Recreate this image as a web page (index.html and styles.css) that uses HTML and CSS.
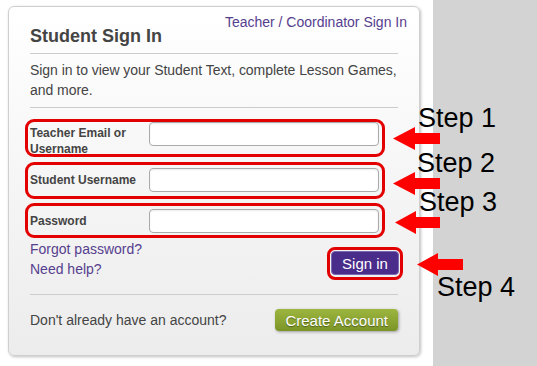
FILE: index.html
```html
<!DOCTYPE html>
<html lang="en">
<head>
    <meta charset="UTF-8">
    <meta name="viewport" content="width=device-width, initial-scale=1.0">
    <title>Student Sign In</title>
    <link rel="stylesheet" href="styles.css">
</head>
<body>

<div class="page">
    <!-- Box di login -->
    <div class="card">
        <div class="card-head">
            <h2>Student Sign In</h2>
            <a class="teacher-link" href="#">Teacher / Coordinator Sign In</a>
        </div>

        <p class="intro">Sign in to view your Student Text, complete Lesson Games, and more.</p>

        <div class="field field-first">
            <label for="q1">Teacher Email or Username</label>
            <input type="text" id="q1">
        </div>
        <div class="field field-second">
            <label for="q2">Student Username</label>
            <input type="text" id="q2">
        </div>
        <div class="field field-third">
            <label for="q3">Password</label>
            <input type="password" id="q3">
        </div>

        <div class="actions">
            <div class="help-links">
                <a href="#">Forgot password?</a>
                <a href="#">Need help?</a>
            </div>
            <div class="signin-mark">
                <button class="signin">Sign in</button>
            </div>
        </div>

        <div class="card-foot">
            <span>Don't already have an account?</span>
            <button class="create">Create Account</button>
        </div>
    </div>
</div>
<div class="side"></div>

<!-- Annotazioni -->
<div class="step step-1">Step 1</div>
<div class="step step-2">Step 2</div>
<div class="step step-3">Step 3</div>
<div class="step step-4">Step 4</div>

<svg class="arrow arrow-1" width="47" height="23" viewBox="0 0 47 23"><polygon points="0,11.5 22,0 22,6 47,6 47,17 22,17 22,23"/></svg>
<svg class="arrow arrow-2" width="47" height="23" viewBox="0 0 47 23"><polygon points="0,11.5 22,0 22,6 47,6 47,17 22,17 22,23"/></svg>
<svg class="arrow arrow-3" width="45" height="23" viewBox="0 0 45 23"><polygon points="0,11.5 21,0 21,6 45,6 45,17 21,17 21,23"/></svg>
<svg class="arrow arrow-4" width="46" height="23" viewBox="0 0 46 23"><polygon points="0,11.5 21,0 21,6 46,6 46,17 21,17 21,23"/></svg>

</body>
</html>
```

FILE: styles.css
```css
    body {
        font-family: "Liberation Sans", Arial, sans-serif;
        display: flex;
        margin: 0;
        height: 366px;
        background-color: #fff;
        overflow: hidden;
    }
    .page {
        width: 433px;
        padding: 6px 0 0 8px;
        box-sizing: border-box;
    }
    .side {
        flex: 1;
        background-color: #d3d3d3;
    }
    .card {
        width: 412px;
        height: 350px;
        box-sizing: border-box;
        padding: 0 21px;
        border: 1px solid #cfcfcf;
        border-radius: 6px;
        background: linear-gradient(#fff, #ececec);
        box-shadow: 1px 1px 3px rgba(0, 0, 0, 0.25);
        color: #444;
    }
    .card-head {
        display: flex;
        justify-content: space-between;
        align-items: flex-start;
        border-bottom: 1px solid #ccc;
        height: 46px;
    }
    .card-head h2 {
        margin: 0;
        padding-top: 18px;
        font-size: 18px;
        line-height: 22px;
        color: #444;
    }
    a {
        color: #56408e;
        text-decoration: none;
        font-size: 14px;
        line-height: 20px;
    }
    .teacher-link {
        margin: 5px -9px 0 0;
    }
    .intro {
        margin: 0;
        padding: 6px 0 7px;
        font-size: 14px;
        line-height: 20px;
        letter-spacing: -0.05px;
        border-bottom: 1px solid #ccc;
    }
    .field {
        display: flex;
        width: 360px;
        box-sizing: border-box;
        margin-left: -5px;
        padding: 0 3px 0 2px;
        border: 3px solid #e30000;
        border-radius: 9px;
    }
    .field label {
        width: 119px;
        font-size: 12px;
        font-weight: bold;
        line-height: 16px;
    }
    .field input {
        width: 230px;
        height: 24px;
        box-sizing: border-box;
        border: 1px solid #aaa;
        border-radius: 4px;
        background-color: #fff;
        box-shadow: inset 0 1px 2px rgba(0, 0, 0, 0.08);
    }
    .field-first {
        margin-top: 11px;
        height: 38px;
        align-items: flex-start;
    }
    .field-first label {
        padding-top: 3px;
    }
    .field-second {
        margin-top: 5px;
        height: 37px;
        align-items: center;
        padding-bottom: 1px;
    }
    .field-third {
        margin-top: 4px;
        height: 35px;
        align-items: center;
    }
    .actions {
        display: flex;
        justify-content: space-between;
        align-items: flex-start;
        height: 56px;
        border-bottom: 1px solid #ccc;
    }
    .help-links {
        display: flex;
        flex-direction: column;
        margin-top: 1px;
    }
    .signin-mark {
        margin: 9px -5px 0 0;
        padding: 1px 1px 2px 1px;
        border: 3px solid #e30000;
        border-radius: 8px;
    }
    button {
        font-family: "Liberation Sans", Arial, sans-serif;
        font-size: 15px;
        color: #fff;
        cursor: pointer;
        border-radius: 4px;
    }
    .signin {
        display: block;
        width: 68px;
        height: 24px;
        padding: 0;
        border: 1px solid #7a68b0;
        background-color: #4a2c8a;
    }
    .card-foot {
        display: flex;
        justify-content: space-between;
        align-items: center;
        padding-top: 14px;
        font-size: 14px;
    }
    .create {
        height: 22px;
        padding: 0 10px;
        border: none;
        background: linear-gradient(#9db63f, #7b9427);
        text-shadow: 0 1px 1px rgba(0, 0, 0, 0.4);
        box-shadow: 1px 1px 3px rgba(0, 0, 0, 0.35);
    }
    .step {
        position: absolute;
        font-size: 27px;
        line-height: 27px;
        color: #000;
    }
    .step-1 { left: 418px; top: 105px; }
    .step-2 { left: 417px; top: 150px; }
    .step-3 { left: 419px; top: 189px; }
    .step-4 { left: 437px; top: 274px; }
    .arrow {
        position: absolute;
        fill: #f00;
    }
    .arrow-1 { left: 393px; top: 127px; }
    .arrow-2 { left: 393px; top: 172px; }
    .arrow-3 { left: 395px; top: 211px; }
    .arrow-4 { left: 417px; top: 253px; }
```
